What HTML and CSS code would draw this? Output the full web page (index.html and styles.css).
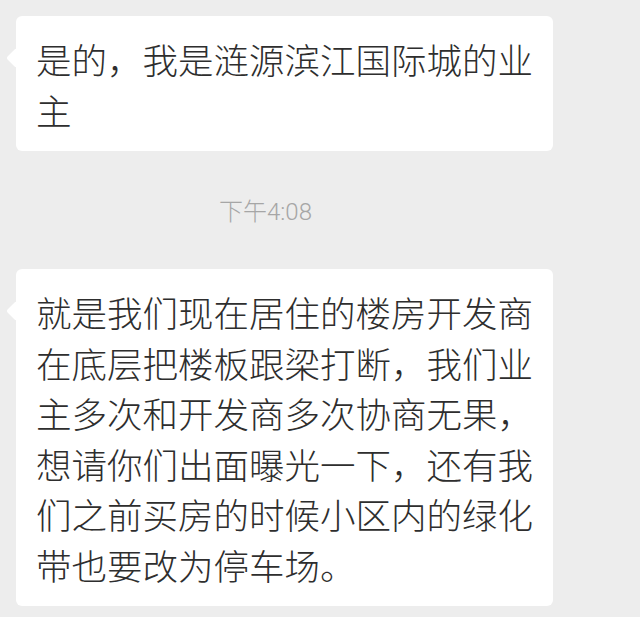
FILE: index.html
```html
<!DOCTYPE html>
<html lang="zh-CN">
<head>
<meta charset="UTF-8" />
<meta name="viewport" content="width=device-width, initial-scale=1" />
<title>聊天记录</title>
<link rel="stylesheet" href="styles.css">
</head>
<body>

<main class="chat">
  <div class="msg">
    <p class="bubble">是的，我是涟源滨江国际城的业主</p>
  </div>

  <div class="time">下午4:08</div>

  <div class="msg">
    <p class="bubble">就是我们现在居住的楼房开发商在底层把楼板跟梁打断，我们业主多次和开发商多次协商无果，想请你们出面曝光一下，还有我们之前买房的时候小区内的绿化带也要改为停车场。</p>
  </div>
</main>

</body>
</html>
```

FILE: styles.css
```css
* {
  box-sizing: border-box;
}
body {
  margin: 0;
  background: #ededed;
  font-family: Roboto, "Noto Sans CJK SC", sans-serif;
  color: #333;
}

.chat {
  padding: 16px 16px 0;
  display: flex;
  flex-direction: column;
}

.msg {
  display: flex;
}

.bubble {
  position: relative;
  margin: 0;
  width: 537px;
  padding: 18px 18px 16px 20px;
  background: #fff;
  border-radius: 6px;
  font-family: "Noto Sans CJK SC", sans-serif;
  font-size: 35.5px;
  font-weight: 300;
  line-height: 50.5px;
  color: #2e2e2e;
}
/* little tail on the left */
.bubble::before {
  content: "";
  position: absolute;
  left: -7px;
  top: 35px;
  width: 14px;
  height: 14px;
  background: #fff;
  border-radius: 2px;
  transform: rotate(45deg);
}

.time {
  margin: 46px 0 41px;
  padding-left: 203px;
  font-size: 24px;
  font-weight: 300;
  line-height: 31px;
  color: #a6a6a6;
}
```
